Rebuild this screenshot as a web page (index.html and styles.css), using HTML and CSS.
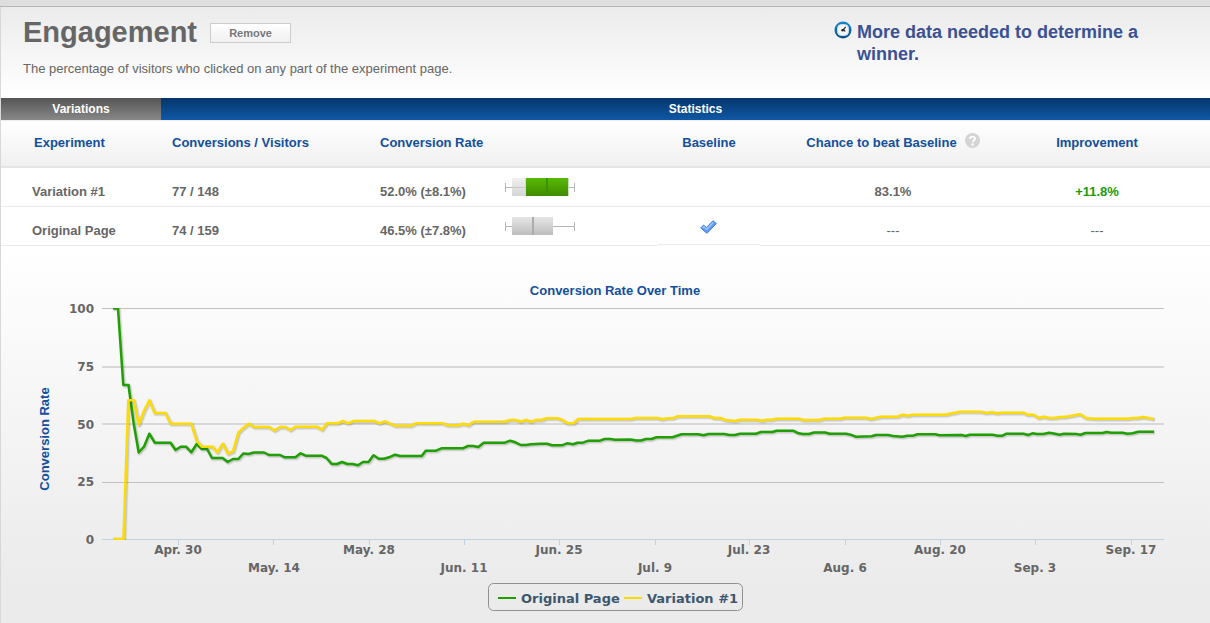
FILE: index.html
```html
<!DOCTYPE html>
<html lang="en">
<head>
<meta charset="utf-8">
<title>Engagement</title>
<link rel="stylesheet" href="styles.css">
</head>
<body>
<div class="topbar"></div>
<main class="panel">
  <header class="goal">
    <div class="goal-info">
      <div class="goal-title">
        <h1>Engagement</h1>
        <button type="button" class="remove">Remove</button>
      </div>
      <p class="goal-text">The percentage of visitors who clicked on any part of the experiment page.</p>
    </div>
    <div class="status">
      <svg class="status-icon" viewBox="0 0 18 18" aria-hidden="true">
        <defs>
          <linearGradient id="ring" x1="0" y1="0" x2="0" y2="1">
            <stop offset="0" stop-color="#1787d0"/><stop offset="1" stop-color="#084f86"/>
          </linearGradient>
        </defs>
        <circle cx="9" cy="9" r="8.5" fill="url(#ring)"/>
        <rect x="3.500" y="3.500" width="11" height="11" rx="4" fill="#f4f6f6" stroke="#c9e0ee" stroke-width="1"/>
        <path d="M11.8 5.8L8.7 9.2M7.8 9H10.5L11 10.6" fill="none" stroke="#333" stroke-width="1.2"/>
        <circle cx="8.6" cy="9.3" r="1.2" fill="#222"/>
      </svg>
      <p class="status-text">More data needed to determine a winner.</p>
    </div>
  </header>

  <table class="results">
    <colgroup>
      <col class="c-name"><col class="c-conv"><col class="c-rate"><col class="c-base"><col class="c-chance"><col class="c-impr">
    </colgroup>
    <thead>
      <tr class="groups">
        <th class="g-var" scope="colgroup">Variations</th>
        <th class="g-stat" scope="colgroup" colspan="5">Statistics</th>
      </tr>
      <tr class="heads">
        <th scope="col" class="name">Experiment</th>
        <th scope="col" class="left">Conversions / Visitors</th>
        <th scope="col" class="left">Conversion Rate</th>
        <th scope="col">Baseline</th>
        <th scope="col"><span class="with-help">Chance to beat Baseline
          <svg class="help" viewBox="0 0 15 15" aria-hidden="true">
            <circle cx="7.5" cy="7.5" r="7.5" fill="#d4d4d4"/>
            <path d="M5 6C5 2.900 10 2.900 10 5.800C10 7.400 7.600 7.500 7.600 9.200" fill="none" stroke="#fff" stroke-width="1.900"/>
            <circle cx="7.600" cy="11.500" r="1.200" fill="#fff"/>
          </svg></span></th>
        <th scope="col" class="impr">Improvement</th>
      </tr>
    </thead>
    <tbody>
      <tr>
        <td class="name">Variation #1</td>
        <td class="left">77 / 148</td>
        <td class="left">
          <div class="rate"><span>52.0% (±8.1%)</span>
            <svg class="box" viewBox="0 0 70 20" aria-hidden="true">
              <defs>
                <linearGradient id="light" x1="0" y1="0" x2="0" y2="1"><stop offset="0" stop-color="#efefef"/><stop offset="1" stop-color="#d6d6d6"/></linearGradient>
                <linearGradient id="green" x1="0" y1="0" x2="0" y2="1"><stop offset="0" stop-color="#57bb02"/><stop offset="1" stop-color="#408a02"/></linearGradient>
              </defs>
              <path d="M0.500 6V15M69.500 6V15M0 10.500H70" stroke="#b5b5b5"/>
              <rect x="7" y="1" width="42" height="18" fill="url(#light)"/>
              <path d="M7 10.500H21" stroke="#c8c8c8"/>
              <rect x="20" y="1" width="44" height="18" fill="#c9dfba"/>
              <rect x="21" y="1" width="42" height="18" fill="url(#green)"/>
              <rect x="41" y="1" width="2" height="18" fill="#3e9103"/>
            </svg></div>
        </td>
        <td></td>
        <td>83.1%</td>
        <td class="impr gain">+11.8%</td>
      </tr>
      <tr>
        <td class="name">Original Page</td>
        <td class="left">74 / 159</td>
        <td class="left">
          <div class="rate"><span>46.5% (±7.8%)</span>
            <svg class="box" viewBox="0 0 70 20" aria-hidden="true">
              <defs>
                <linearGradient id="grey" x1="0" y1="0" x2="0" y2="1"><stop offset="0" stop-color="#e6e6e6"/><stop offset="1" stop-color="#bdbdbd"/></linearGradient>
              </defs>
              <path d="M0.500 6V15M69.500 6V15M0 10.500H70" stroke="#b5b5b5"/>
              <rect x="7" y="1" width="41" height="18" fill="url(#grey)"/>
              <rect x="27" y="1" width="2" height="18" fill="#acacac"/>
            </svg></div>
        </td>
        <td class="base">
          <svg class="check" viewBox="0 0 17 14" role="img" aria-label="Baseline">
            <path d="M0.700 8L3.500 5L6.500 7.500L13 0.700L16.300 3.500L7 13.300Z" fill="#5f9df3" stroke="#3f7ddb" stroke-width="1" stroke-linejoin="round"/>
            <path d="M2.500 7.800L3.700 6.600L6.700 9.300L13.200 2.500" fill="none" stroke="#a3c8fa" stroke-width="1.300"/>
          </svg>
        </td>
        <td class="none">---</td>
        <td class="impr none">---</td>
      </tr>
    </tbody>
  </table>

  <section class="chart">
    <svg viewBox="1 246 1209 377" role="img" aria-label="Conversion Rate Over Time">
      <text class="heading" x="615" y="295">Conversion Rate Over Time</text>
      <text class="heading" transform="translate(49 439) rotate(-90)">Conversion Rate</text>

      <g class="grid">
        <path d="M102 308.500H1164"/>
        <path class="soft" d="M102 367H1164M102 424H1164"/>
        <path d="M102 482.500H1164"/>
        <path class="axis" d="M102 539.500H1164M178.500 540V545M273.500 540V545M369.500 540V545M464.500 540V545M559.500 540V545M655.500 540V545M749.500 540V545M845.500 540V545M940.500 540V545M1035.500 540V545M1131.500 540V545"/>
      </g>

      <g class="y-labels">
        <text x="94" y="313">100</text>
        <text x="94" y="371">75</text>
        <text x="94" y="429">50</text>
        <text x="94" y="486">25</text>
        <text x="94" y="544">0</text>
      </g>
      <g class="x-labels">
        <text x="178" y="554">Apr. 30</text>
        <text x="274" y="572">May. 14</text>
        <text x="369" y="554">May. 28</text>
        <text x="464" y="572">Jun. 11</text>
        <text x="559" y="554">Jun. 25</text>
        <text x="655" y="572">Jul. 9</text>
        <text x="749" y="554">Jul. 23</text>
        <text x="845" y="572">Aug. 6</text>
        <text x="940" y="554">Aug. 20</text>
        <text x="1035" y="572">Sep. 3</text>
        <text x="1131" y="554">Sep. 17</text>
      </g>

      <defs>
        <clipPath id="plot"><rect x="102" y="308" width="1062" height="232"/></clipPath>
        <path id="original" d="M113 308.500H118L123.300 385H128.500L133.700 423.500L138.700 452.500L144 446.700L149.300 433.700L154.700 442.700H170.500L175.500 450L180.700 446.700H186L191.300 452.300L196.700 444L201.700 449H207L212 458H222.500L227.700 462L233 459H238.300L243.300 453.500L248.500 454L254 452.500H264L269 455H280L284.700 457.300H295.500L300.500 453.300L305.700 455.700H321.500L326.500 458L331.700 464H337L342 462L347.300 464H352.500L358 465.300L363 462H368.500L373.500 455.300L378.700 458.700H384L389 457.300L395 454.700L400 456H421.700L425.700 450.700H436L441.500 448.300H462.700L468 446H473L478.300 447L483.700 442.700H505L510 440.700L515.300 442.300L520.700 445H526L531 444.300L541 443.700H547L552 445.300H562L567 443.300L573 444.300L577.500 442.700H583L588.500 440.700H600L604.500 439H610L615 439.700L630.500 439.500L636 440.500H641L646 439H651.500L656.500 437.300H672.500L681.500 434.300H698L703.500 435.300L708.500 434H724L729.500 435H735L740 433.700H756L761 432H772.500L776.500 430.700H793L798.500 433.300L803 434H809L814 432.500H825L829.500 433.700H846L850.500 434.700L855.500 436.700L871.500 436.300L876 435H888L893 436L902 436.700L907.500 435.700H913L917.500 434.300H935L939.500 435.300L961.500 435L965.500 436L970 434.700H992.500L997.500 435.700H1002.500L1006.500 433.700H1023.500L1028 435L1032.500 433.300L1036.500 434H1043.500L1049 432.700L1055 433.700L1059.500 434.700L1064 433.700L1076 434L1080.500 434.700L1085.500 433H1102.500L1106.500 432L1111 432.700H1122.500L1127.500 433.700L1132.500 433.300L1138.500 431.700H1154"/>
        <path id="variation" d="M113 539H123.500L128.300 400.300H133.700L138.700 424.700L144 410.700L149.300 400.300L154.700 413H165.300L170.700 423.700H191.300L196.700 441L201.700 446.700H212.300L217.300 452.300L222.700 443.700L228 453.700L233 451.300L238.300 432.700L243.300 428L248.700 423.700L254 427H269L274.300 430.500L280 427H285L290.300 430L295.300 426.700H316.700L322 429.700L327 423.300H337.700L342.700 421L348 423.300L353.700 421H374L379.300 423.300L384.700 421.300L395 425.700H411L416 423.300H442.700L447.700 425.300H458L463 423.700L468.300 425.300L473.700 421.700H505L510 420H515.300L520.700 421.700L525.700 420L531 421.700L536 420H541.300L546.700 418.300H557.300L562.300 420L567.700 423.300H573.300L578.300 419H630.700L635 418H657.300L662.300 419.300L667.300 418.300H672.300L677.300 416.300H709.300L714 418H720L725 420L735 421L740 419.700H756L761.700 420.700L766.700 419.700H771.700L776.700 418.700H798.300L803.300 420H819L824.300 418.700H840L844.300 417.700H866L871 419L880.700 416.700H897.700L902.300 414.700L907.700 415.700L912.700 414.700H945L960 411.700H980.700L986 413L991.300 412.300L996.700 413.300L1001.700 412.700H1023.300L1027.300 414.700H1033.300L1038.700 418L1043.700 416.700L1048.700 418H1054.700L1060 417H1065L1080 414.300L1086 418L1093.300 418.700H1127.700L1132.700 418H1137.700L1142.700 417L1154 419"/>
      </defs>
      <g class="series" clip-path="url(#plot)">
        <use class="shade wide" href="#original" x="1" y="1"/>
        <use class="shade" href="#original" x="1" y="1"/>
        <use class="line-original" href="#original"/>
        <use class="shade wide" href="#variation" x="1" y="1"/>
        <use class="shade" href="#variation" x="1" y="1"/>
        <use class="line-variation" href="#variation"/>
      </g>

      <g class="legend">
        <rect x="488.500" y="583.500" width="254" height="27" rx="5"/>
        <path class="line-original" d="M498 598H516"/>
        <text x="521" y="603">Original Page</text>
        <path class="line-variation" d="M624 598H642"/>
        <text x="647" y="603">Variation #1</text>
      </g>
    </svg>
  </section>
</main>
</body>
</html>
```
FILE: styles.css
```css
* {
  box-sizing: border-box;
}

body {
  margin: 0;
  font-family: "Liberation Sans", Arial, sans-serif;
  font-size: 13px;
  color: #666;
  background: #ebebeb;
}

.topbar {
  height: 7px;
  background: #dedede;
  border-bottom: 1px solid #b6b6bc;
}

.panel {
  border-left: 1px solid #d8d8d8;
}

.goal {
  display: flex;
  align-items: flex-start;
  min-height: 91px;
  padding: 8px 24px 0 22px;
  background: linear-gradient(#ebebeb, #fff);
}

.goal-info {
  flex: 1;
}

.goal-title {
  display: flex;
  align-items: center;
  gap: 13px;
}

h1 {
  margin: 0;
  font-size: 29px;
  line-height: 34px;
}

.remove {
  width: 81px;
  height: 20px;
  margin-top: 2px;
  padding: 0;
  border: 1px solid #ccc;
  background: linear-gradient(#fff, #f0f0f0);
  color: #777;
  font: bold 11px "Liberation Sans", Arial, sans-serif;
}

.goal-text {
  margin: 12px 0 0;
  font-size: 13px;
  line-height: 16px;
}

.status {
  display: flex;
  flex: 0 0 352px;
  gap: 5px;
  padding-top: 6px;
}

.status-icon {
  flex: none;
  width: 18px;
  height: 18px;
}

.status-text {
  max-width: 320px;
  margin: 0;
  font-size: 18px;
  font-weight: bold;
  line-height: 22px;
  color: #3b5194;
}

.results {
  width: 100%;
  table-layout: fixed;
  border-collapse: separate;
  border-spacing: 0;
  font-weight: bold;
  text-align: center;
  background: #fff;
}

.c-name { width: 160px; }
.c-conv { width: 208px; }
.c-rate { width: 289px; }
.c-base { width: 102px; }
.c-chance { width: 266px; }
.c-impr { width: 184px; }

.results th,
.results td {
  padding: 0;
}

.groups th {
  height: 22px;
  font-size: 12px;
  color: #fff;
}

.g-var {
  background: linear-gradient(#555, #888);
}

.g-stat {
  background: linear-gradient(#04366b, #1058a6);
}

.groups .g-stat {
  padding-left: 20px;
}

.heads th {
  height: 48px;
  padding-bottom: 2px;
  border-top: 1px solid #ededed;
  border-bottom: 2px solid #e5e5e5;
  color: #124f9c;
  background: linear-gradient(#fff, #f0f0f0);
}

.results .left {
  padding-left: 11px;
  text-align: left;
}

.results .name {
  padding-left: 31px;
  text-align: left;
}

.results .heads .name {
  padding-left: 33px;
}

.results .impr {
  padding-right: 42px;
}

.results td {
  height: 39px;
  padding-top: 8px;
  border-bottom: 1px solid #ebebeb;
}

.with-help {
  display: inline-flex;
  align-items: center;
  gap: 8px;
}

.help {
  width: 15px;
  height: 15px;
  margin-bottom: 4px;
}

.rate {
  display: flex;
  align-items: center;
}

.rate span {
  width: 125px;
}

.box {
  width: 70px;
  height: 20px;
  margin: -10px 0 -2px;
}

.check {
  display: inline-block;
  width: 17px;
  height: 14px;
  vertical-align: middle;
}

.results .base {
  padding: 0 2px 0 0;
  border-bottom-color: #fff;
  box-shadow: inset 0 -1px #ebebeb;
}

.gain {
  color: #1b9a0a;
}

.none {
  font-weight: normal;
}

.chart {
  background: linear-gradient(#fff, #ebebeb 340px);
}

.chart svg {
  display: block;
  width: 100%;
  height: auto;
}

.heading {
  font-size: 13px;
  font-weight: bold;
  text-anchor: middle;
  fill: #124f9c;
}

.grid path {
  fill: none;
  stroke: #c0c0c0;
}

.grid .soft {
  stroke: #d8d8d8;
  stroke-width: 2;
}

.grid .axis {
  stroke: #c0d0e0;
}

.y-labels,
.x-labels,
.legend {
  font-family: "DejaVu Sans", Verdana, sans-serif;
  font-size: 12px;
  font-weight: bold;
  fill: #666;
}

.y-labels {
  text-anchor: end;
}

.x-labels {
  text-anchor: middle;
}

.series {
  fill: none;
  stroke-linejoin: round;
}

.shade {
  stroke: #000;
  stroke-opacity: 0.12;
  stroke-width: 3;
}

.wide {
  stroke-opacity: 0.05;
  stroke-width: 5;
}

.line-original {
  stroke: #1fa000;
  stroke-width: 2;
}

.line-variation {
  stroke: #ffdc00;
  stroke-width: 2;
}

.series .line-original,
.series .line-variation {
  stroke-width: 2.5;
}

.legend {
  font-size: 13px;
  fill: #3e576f;
}

.legend rect {
  fill: none;
  stroke: #909090;
}
```
